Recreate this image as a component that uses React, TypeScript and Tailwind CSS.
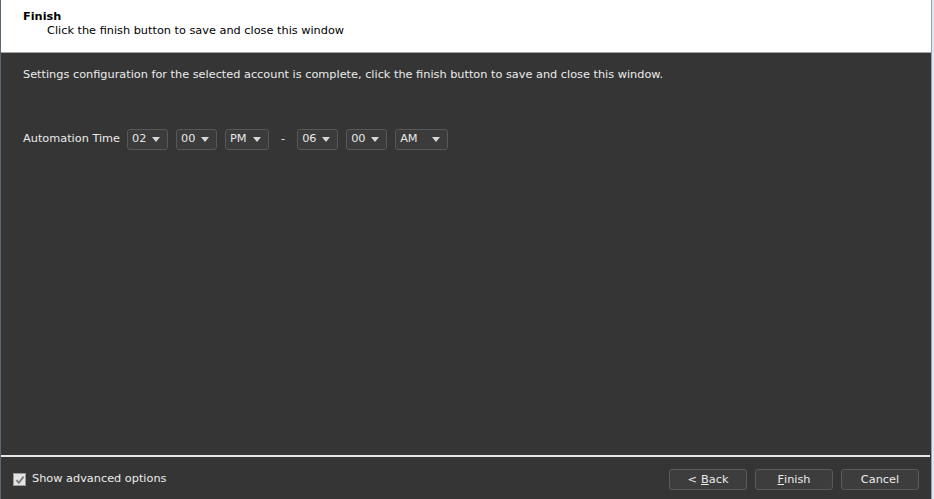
import React from "react";

const font = { fontFamily: '"DejaVu Sans", Verdana, sans-serif' };

const Arrow = () => (
  <svg width="8" height="5" viewBox="0 0 8 5" className="shrink-0">
    <path d="M0 0h8L4 5z" fill="#d8d8d8" />
  </svg>
);

const TimeSelect = ({ value, width }: { value: string; width: string }) => (
  <div
    className={`${width} h-[21px] flex items-center justify-between pl-[4px] pr-[7px] bg-[#3b3b3b] border border-[#585858] rounded-[3px] text-[#e8e8e8]`}
  >
    <span>{value}</span>
    <Arrow />
  </div>
);

const WizardButton = ({ children }: { children: React.ReactNode }) => (
  <button className="w-[78px] h-[21px] flex items-center justify-center bg-[#3d3d3d] border border-[#5a5a5a] rounded-[3px] text-[#ececec] text-[11.3px] leading-none">
    {children}
  </button>
);

export default function App() {
  return (
    <div
      className="w-[934px] h-[499px] flex bg-[#353535] text-[11.3px] overflow-hidden"
      style={font}
    >
      <div className="w-[1px] bg-[#5b6673]" />
      <div className="flex-1 flex flex-col">
        {/* header */}
        <div className="h-[53px] bg-white border-b border-[#a3a3a3] pt-[10px] pl-[22px] text-black">
          <div className="font-bold leading-[14px]">Finish</div>
          <div className="pl-[24px] leading-[14px]">
            Click the finish button to save and close this window
          </div>
        </div>

        {/* body */}
        <div className="flex-1 flex flex-col pl-[22px] pt-[15px] text-[#ececec]">
          <div className="leading-[14px]">
            Settings configuration for the selected account is complete, click
            the finish button to save and close this window.
          </div>
          <div className="flex items-center mt-[47px] h-[21px]">
            <span className="mr-[7px]">Automation Time</span>
            <div className="flex items-center gap-[8px]">
              <TimeSelect value="02" width="w-[41px]" />
              <TimeSelect value="00" width="w-[41px]" />
              <TimeSelect value="PM" width="w-[44px]" />
            </div>
            <span className="mx-[12px]">-</span>
            <div className="flex items-center gap-[8px]">
              <TimeSelect value="06" width="w-[41px]" />
              <TimeSelect value="00" width="w-[41px]" />
              <TimeSelect value="AM" width="w-[53px]" />
            </div>
          </div>
        </div>

        <div className="h-[2px] bg-[#e6e6e6] mr-[1px]" />

        {/* footer */}
        <div className="h-[42px] flex items-center justify-between pl-[12px] pr-[12px] pt-[3px] text-[#ececec]">
          <label className="flex items-center gap-[6px]">
            <span className="w-[13px] h-[13px] flex items-center justify-center bg-[#e3e3e3] border border-[#9a9a9a]">
              <svg width="10" height="10" viewBox="0 0 10 10">
                <path
                  d="M1.5 5.2l2.3 2.6L8.6 1.6"
                  stroke="#7a7a7a"
                  strokeWidth="1.8"
                  fill="none"
                />
              </svg>
            </span>
            <span>Show advanced options</span>
          </label>
          <div className="flex gap-[8px]">
            <WizardButton>
              &lt; <span className="underline ml-[4px]">B</span>ack
            </WizardButton>
            <WizardButton>
              <span className="underline">F</span>inish
            </WizardButton>
            <WizardButton>Cancel</WizardButton>
          </div>
        </div>
      </div>
      <div className="w-[1px] bg-[#9aa3ad]" />
      <div className="w-[2px] bg-[#dfe8f2]" />
    </div>
  );
}
